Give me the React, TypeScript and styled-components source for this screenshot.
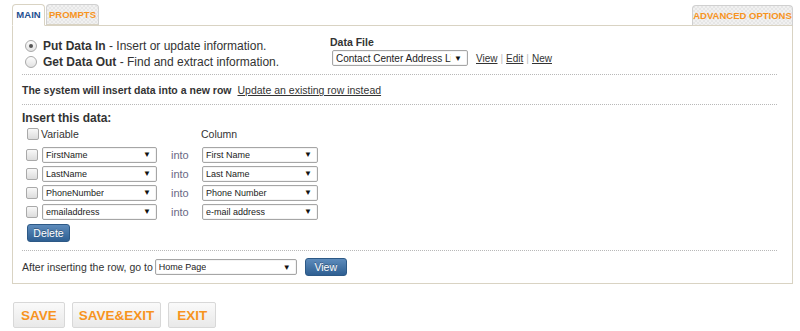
import React from "react";
import styled, { createGlobalStyle } from "styled-components";

const Global = createGlobalStyle`
  html, body { margin: 0; padding: 0; background: #fff; }
  body { font-family: "Liberation Sans", Arial, sans-serif; font-size: 12px; color: #333; }
`;

const Page = styled.div`
  padding: 5px 7px 0 12px;
  width: 781px;
`;

const TabBar = styled.div`
  display: flex;
  justify-content: space-between;
  align-items: flex-end;
  height: 21px;
  margin-bottom: -1px;
  position: relative;
  z-index: 1;
`;

const TabGroup = styled.div`
  display: flex;
  gap: 1px;
`;

const Tab = styled.div<{ $active?: boolean; $w: number }>`
  box-sizing: border-box;
  width: ${(p) => p.$w}px;
  height: ${(p) => (p.$active ? 22 : 21)}px;
  display: flex;
  align-items: center;
  justify-content: center;
  padding-bottom: ${(p) => (p.$active ? 1 : 0)}px;
  font-size: 9.5px;
  font-weight: bold;
  white-space: nowrap;
  border: 1px solid ${(p) => (p.$active ? "#d9d3c3" : "#d0d0d0")};
  border-bottom: ${(p) => (p.$active ? "1px solid #fff" : "1px solid #d9d3c3")};
  border-radius: 4px 4px 0 0;
  color: ${(p) => (p.$active ? "#1f4f8f" : "#f7941e")};
  background: ${(p) =>
    p.$active
      ? "#fff"
      : "repeating-conic-gradient(#f1f1f1 0% 25%, #e6e6e6 0% 50%) 0 0 / 4px 4px"};
`;

const Panel = styled.div`
  border: 1px solid #d9d3c3;
  padding: 7px 15px 7px 9px;
`;

const TopSection = styled.div`
  display: flex;
  height: 41px;
`;

const RadioCol = styled.div`
  width: 305px;
  padding-top: 5px;
  padding-left: 3px;
`;

const RadioRow = styled.div`
  display: flex;
  align-items: center;
  height: 16px;
  line-height: 16px;
  gap: 6px;
`;

const Radio = styled.span<{ $checked?: boolean }>`
  box-sizing: border-box;
  width: 12px;
  height: 12px;
  border-radius: 50%;
  border: 1px solid #a9a9a9;
  background: linear-gradient(#fdfdfd, #e2e2e2);
  display: flex;
  align-items: center;
  justify-content: center;
  &::after {
    content: "";
    display: ${(p) => (p.$checked ? "block" : "none")};
    width: 4px;
    height: 4px;
    border-radius: 50%;
    background: #555;
  }
`;

const DataFileCol = styled.div`
  display: flex;
  flex-direction: column;
`;

const Label = styled.div`
  font-weight: bold;
  font-size: 10.5px;
  line-height: 15px;
  padding-top: 2px;
`;

const FileRow = styled.div`
  display: flex;
  align-items: center;
  margin-left: 2px;
  gap: 8px;
`;

const Select = styled.div<{ $w: number; $fs?: number }>`
  box-sizing: border-box;
  width: ${(p) => p.$w}px;
  height: 16px;
  border: 1px solid #a6a6a6;
  border-radius: 2px;
  background: #fff;
  display: flex;
  align-items: center;
  justify-content: space-between;
  padding: 0 5px 0 3px;
  font-size: ${(p) => p.$fs ?? 9}px;
  color: #222;
  white-space: nowrap;
  overflow: hidden;
  box-shadow: inset 0 0 0 1px #f4f4f4;
`;

const SelectText = styled.span`
  overflow: hidden;
  text-overflow: clip;
`;

const Arrow = styled.span`
  font-size: 8px;
  margin-left: 3px;
  color: #111;
  flex-shrink: 0;
`;

const Links = styled.div`
  display: flex;
  align-items: center;
  gap: 3px;
  font-size: 10px;
  color: #bbb;
`;

const A = styled.a`
  color: #333;
  text-decoration: underline;
  font-size: 10px;
`;

const Divider = styled.div`
  border-top: 1px dotted #b8b8b8;
`;

const ModeRow = styled.div`
  display: flex;
  align-items: center;
  height: 16px;
  padding: 7px 0 6px;
  gap: 6px;
  font-size: 10.5px;
`;

const Bold = styled.span`
  font-weight: bold;
`;

const ModeLink = styled.a`
  color: #333;
  text-decoration: underline;
`;

const SectionTitle = styled.div`
  font-weight: bold;
  line-height: 16px;
  margin-top: 5px;
  font-size: 12px;
`;

const Grid = styled.div`
  display: grid;
  grid-template-columns: 16px 129px 31px auto;
  grid-auto-rows: 19px;
  align-items: center;
  padding-left: 4px;
  width: 320px;
`;

const HeaderRow = styled.div`
  display: grid;
  grid-template-columns: 174px auto;
  height: 16px;
  align-items: center;
  padding-left: 5px;
  margin-bottom: 3px;
  font-size: 10.5px;
`;

const VarLabel = styled.div`
  display: flex;
  align-items: center;
  gap: 2px;
`;

const Checkbox = styled.span`
  box-sizing: border-box;
  display: inline-block;
  width: 12px;
  height: 12px;
  border: 1px solid #a9a9a9;
  border-radius: 2px;
  background: linear-gradient(#f8f8f8, #dcdcdc);
`;

const Into = styled.span`
  color: #6a6884;
  font-size: 11px;
`;

const BlueButton = styled.button<{ $w: number }>`
  box-sizing: border-box;
  width: ${(p) => p.$w}px;
  height: 18px;
  border: 1px solid #2d5986;
  border-radius: 3px;
  background: linear-gradient(#5d8bbb, #2e5f92);
  color: #fff;
  font-family: "Liberation Sans", Arial, sans-serif;
  font-size: 10.5px;
  padding: 0;
  display: flex;
  align-items: center;
  justify-content: center;
  text-shadow: 0 -1px 0 rgba(0, 0, 0, 0.3);
`;

const DeleteWrap = styled.div`
  padding: 3px 0 8px 5px;
`;

const AfterRow = styled.div`
  display: flex;
  align-items: center;
  height: 18px;
  padding: 7px 0 0;
  gap: 8px;
`;

const AfterLabel = styled.span`
  display: flex;
  align-items: center;
  gap: 2px;
  font-size: 10.5px;
`;

const Footer = styled.div`
  display: flex;
  gap: 7px;
  margin-top: 18px;
  padding-left: 1px;
`;

const FootButton = styled.button<{ $pad?: number }>`
  box-sizing: border-box;
  height: 26px;
  padding: 0 ${(p) => p.$pad ?? 7}px;
  border: 1px solid #d8d8d8;
  border-radius: 2px;
  background: linear-gradient(#fafafa, #e9e9e9);
  color: #f7941e;
  font-family: "Liberation Sans", Arial, sans-serif;
  font-size: 13.5px;
  font-weight: bold;
`;

const rows = [
  ["FirstName", "First Name"],
  ["LastName", "Last Name"],
  ["PhoneNumber", "Phone Number"],
  ["emailaddress", "e-mail address"],
];

export default function App() {
  return (
    <>
      <Global />
      <Page>
        <TabBar>
          <TabGroup>
            <Tab $active $w={33}>MAIN</Tab>
            <Tab $w={53}>PROMPTS</Tab>
          </TabGroup>
          <Tab $w={101}>ADVANCED OPTIONS</Tab>
        </TabBar>
        <Panel>
          <TopSection>
            <RadioCol>
              <RadioRow>
                <Radio $checked />
                <span>
                  <Bold>Put Data In</Bold> - Insert or update information.
                </span>
              </RadioRow>
              <RadioRow>
                <Radio />
                <span>
                  <Bold>Get Data Out</Bold> - Find and extract information.
                </span>
              </RadioRow>
            </RadioCol>
            <DataFileCol>
              <Label>Data File</Label>
              <FileRow>
                <Select $w={136} $fs={10}>
                  <SelectText>Contact Center Address List</SelectText>
                  <Arrow>▼</Arrow>
                </Select>
                <Links>
                  <A>View</A>|<A>Edit</A>|<A>New</A>
                </Links>
              </FileRow>
            </DataFileCol>
          </TopSection>
          <Divider />
          <ModeRow>
            <Bold>The system will insert data into a new row</Bold>
            <ModeLink>Update an existing row instead</ModeLink>
          </ModeRow>
          <Divider />
          <SectionTitle>Insert this data:</SectionTitle>
          <HeaderRow>
            <VarLabel>
              <Checkbox />
              Variable
            </VarLabel>
            <span>Column</span>
          </HeaderRow>
          <Grid>
            {rows.map(([v, c]) => (
              <React.Fragment key={v}>
                <Checkbox />
                <Select $w={115}>
                  <SelectText>{v}</SelectText>
                  <Arrow>▼</Arrow>
                </Select>
                <Into>into</Into>
                <Select $w={116}>
                  <SelectText>{c}</SelectText>
                  <Arrow>▼</Arrow>
                </Select>
              </React.Fragment>
            ))}
          </Grid>
          <DeleteWrap>
            <BlueButton $w={43}>Delete</BlueButton>
          </DeleteWrap>
          <Divider />
          <AfterRow>
            <AfterLabel>
              After inserting the row, go to
              <Select $w={142}>
                <SelectText>Home Page</SelectText>
                <Arrow>▼</Arrow>
              </Select>
            </AfterLabel>
            <BlueButton $w={42}>View</BlueButton>
          </AfterRow>
        </Panel>
        <Footer>
          <FootButton>SAVE</FootButton>
          <FootButton $pad={6}>SAVE&amp;EXIT</FootButton>
          <FootButton $pad={8}>EXIT</FootButton>
        </Footer>
      </Page>
    </>
  );
}
